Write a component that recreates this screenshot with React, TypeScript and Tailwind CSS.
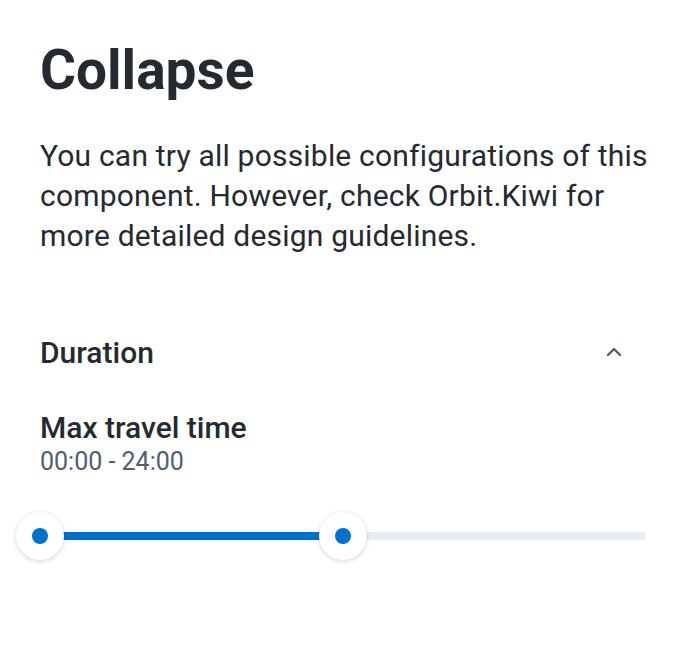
import React from "react";

export default function App() {
  return (
    <div className="w-[686px] h-[648px] bg-white px-10 pt-[38px] text-[#252a31]" style={{ fontFamily: "Roboto, 'Noto Sans', sans-serif" }}>
      <h1 className="text-[55px] leading-[64px] font-bold">Collapse</h1>
      <p className="mt-[34px] mr-[-20px] text-[30px] leading-[40px] tracking-[0.2px]">
        You can try all possible configurations of this component. However, check Orbit.Kiwi for more detailed design guidelines.
      </p>
      <div className="mt-[76px] flex items-center justify-between h-[40px]">
        <span className="text-[30px] font-medium">Duration</span>
        <svg width="24" height="24" viewBox="0 0 24 24" className="mr-[20px]" fill="none" stroke="#4f5e71" strokeWidth="2.4" strokeLinecap="round" strokeLinejoin="round">
          <path d="M6 15l6-6 6 6" />
        </svg>
      </div>
      <div className="mt-[38px]">
        <div className="text-[30px] leading-[36px] font-medium">Max travel time</div>
        <div className="text-[25px] leading-[32px] text-[#4f5e71]">00:00 - 24:00</div>
      </div>
      <div className="relative mt-[34px] h-[48px] flex items-center">
        <div className="relative w-full h-2 rounded-full bg-[#e8edf1]">
          <div className="absolute left-0 top-0 h-2 w-1/2 bg-[#0172cb]" />
        </div>
        <div className="absolute left-[-24px] top-0 w-12 h-12 rounded-full bg-white shadow-[0_1px_4px_rgba(0,0,0,0.18)] flex items-center justify-center">
          <div className="w-4 h-4 rounded-full bg-[#0172cb]" />
        </div>
        <div className="absolute left-[calc(50%-24px)] top-0 w-12 h-12 rounded-full bg-white shadow-[0_1px_4px_rgba(0,0,0,0.18)] flex items-center justify-center">
          <div className="w-4 h-4 rounded-full bg-[#0172cb]" />
        </div>
      </div>
    </div>
  );
}
